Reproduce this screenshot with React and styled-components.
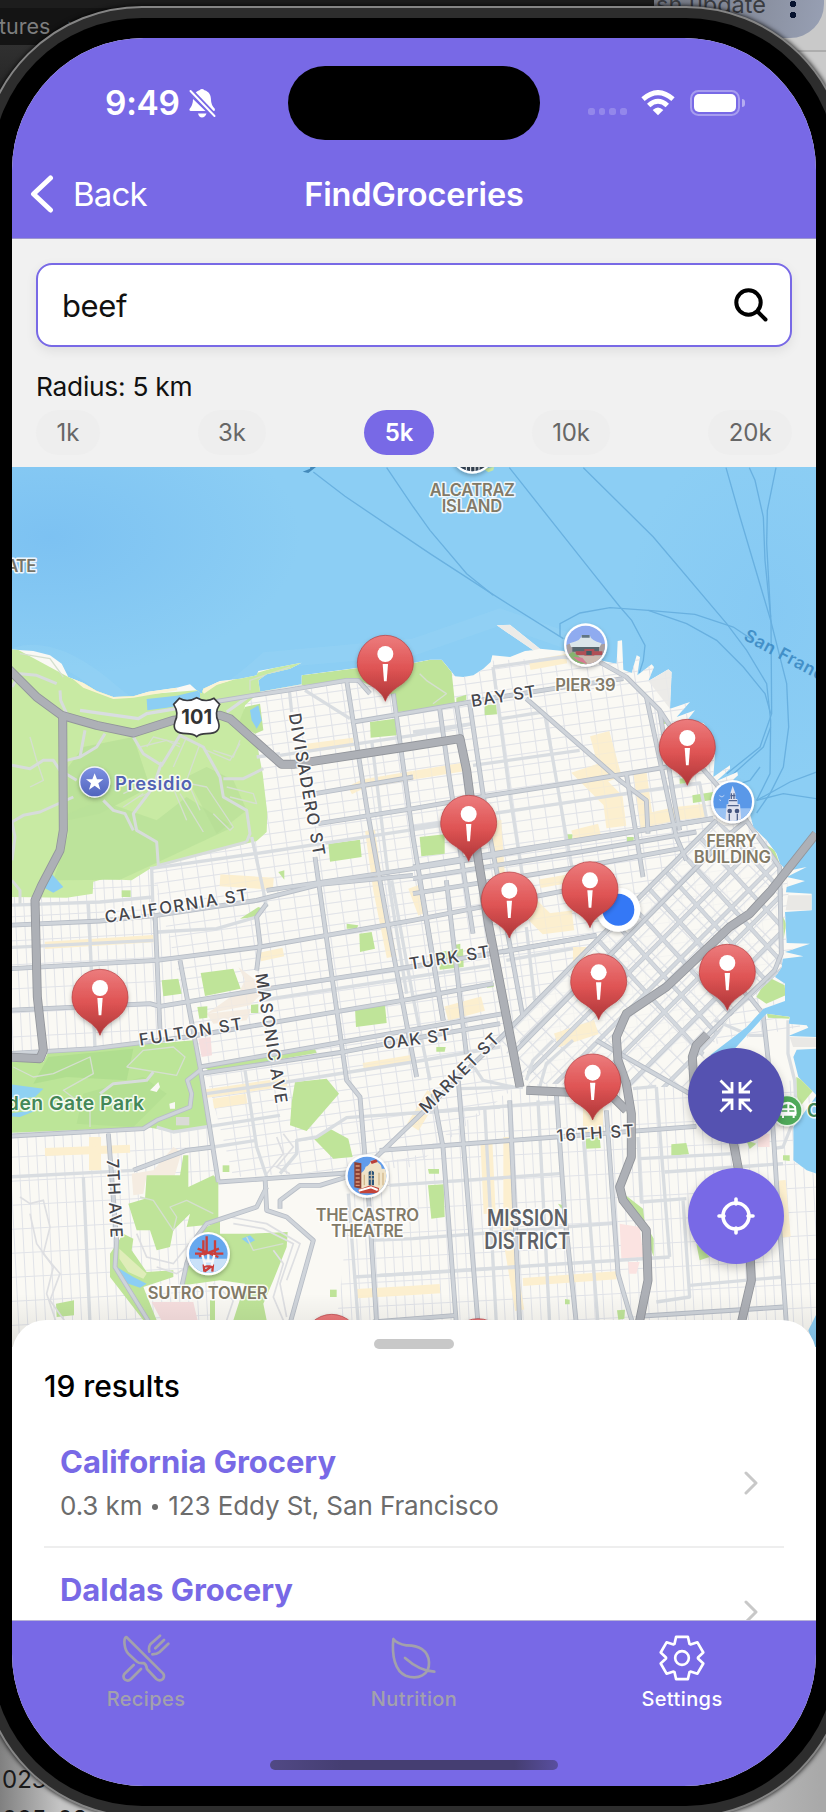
import React from "react";
import styled, { createGlobalStyle } from "styled-components";

const purple = "#7869e6";

const Global = createGlobalStyle`
  * { box-sizing: border-box; }
  body { margin: 0; overflow: hidden; background: #c4c4c4; font-family: Inter, "Liberation Sans", sans-serif; }
`;

/* ---------- desktop behind the device ---------- */
const Stage = styled.main`
  display: grid;
  grid-template: 1812px / 826px;
  overflow: hidden;
  > * { grid-area: 1 / 1; }
`;
const Desktop = styled.div`
  display: flex;
  flex-direction: column;
  justify-content: space-between;
  background: linear-gradient(90deg, #2a2a2a 0 50%, #c6c6c6 50%);
`;
const TopWindows = styled.div`
  display: flex;
  height: 300px;
`;
const DarkWindow = styled.div`
  width: 654px;
  background: linear-gradient(#1d1d1d 0 8px, #141414 8px 45px, #303030 45px, #222 110px);
`;
const Crumb = styled.div`
  padding-top: 8px;
  height: 45px;
  line-height: 37px;
  font-size: 21.5px;
  color: #7e7e7e;
  white-space: pre;
  text-indent: -1px;
`;
const LightWindow = styled.div`
  flex: 1;
  background: linear-gradient(#c9c9c9 0 50px, #adadad 50px 52px, #cbcbcb 52px);
`;
const UpdatePill = styled.div`
  display: flex;
  align-items: flex-start;
  justify-content: space-between;
  width: 170px;
  height: 38px;
  padding: 0 28px 0 2px;
  overflow: hidden;
  border-radius: 0 0 34px 0;
  background: linear-gradient(100deg, #727681, #98a0b4);
  font-size: 23.5px;
  line-height: 10px;
  color: #393b40;
  white-space: nowrap;
`;
const MenuDots = styled.i`
  width: 6px;
  height: 20px;
  background: radial-gradient(circle at 3px 4px, #06122e 3px, transparent 3.5px), radial-gradient(circle at 3px 15px, #06122e 3px, transparent 3.5px);
`;
const BottomWindow = styled.div`
  display: flex;
  flex-direction: column;
  justify-content: flex-end;
  height: 160px;
  padding-left: 2px;
  background: linear-gradient(90deg, #808080, #c4c4c4 60px 700px, #a9a9a9 820px);
  font-size: 24px;
  line-height: 40px;
  color: #1a1a1a;
  overflow: hidden;
`;
const FileLine = styled.span`
  height: 50px;
  flex: none;
  &:last-child { height: 2px; line-height: 20px; }
`;

/* ---------- device ---------- */
const Device = styled.div`
  width: 868px;
  height: 1812px;
  margin: 6px 0 0 -20px;
  border: 2px solid #858585;
  border-radius: 162px;
  background: #2d2d2d;
  padding: 10px;
  box-shadow: 0 0 5px #000;
`;
const Bezel = styled.div`
  height: 100%;
  padding: 20px;
  border-radius: 150px;
  background: #000;
`;
const Screen = styled.div`
  display: flex;
  flex-direction: column;
  height: 1748px;
  overflow: hidden;
  border-radius: 132px;
  background: #fff;
`;
const Header = styled.header`
  flex: none;
  height: 201px;
  background: ${purple};
  border-bottom: 1px solid #9e97cf;
  color: #fff;
`;
const StatusBar = styled.div`
  display: grid;
  grid-template-columns: 276px 252px 276px;
  align-items: center;
  padding-top: 27px;
  height: 102px;
`;
const Clock = styled.div`
  display: flex;
  align-items: center;
  gap: 9px;
  padding: 1px 0 0 93px;
  font-size: 33.5px;
  font-weight: 600;
  letter-spacing: -0.3px;
`;
const Island = styled.div`
  height: 74px;
  border-radius: 37px;
  background: #000;
`;
const Signals = styled.div`
  display: flex;
  align-items: center;
  padding-left: 48px;
`;
const Dots = styled.div`
  display: flex;
  gap: 4px;
  padding-top: 18px;
  margin-right: 14px;
  i { width: 6.7px; height: 6.7px; border-radius: 2.5px; background: rgba(255,255,255,.2); }
`;
const Battery = styled.div`
  width: 50px;
  height: 26px;
  margin-left: 15px;
  padding: 2px;
  border: 2px solid rgba(255,255,255,.35);
  border-radius: 8.5px;
  &::before { content: ""; display: block; height: 18px; border-radius: 5px; background: #fff; }
`;
const BatteryTip = styled.i`
  width: 3px;
  height: 8px;
  margin-left: 2px;
  border-radius: 0 4px 4px 0;
  background: rgba(255,255,255,.45);
`;
const NavBar = styled.nav`
  display: grid;
  grid-template-columns: 200px 1fr 200px;
  align-items: center;
  height: 98px;
  padding-bottom: 6px;
  padding-top: 16px;
`;
const BackButton = styled.div`
  display: flex;
  align-items: center;
  gap: 19px;
  padding-left: 17px;
  font-size: 33px;
  letter-spacing: -0.8px;
`;
const Title = styled.h1`
  margin: 0;
  text-align: center;
  font-size: 32.5px;
  font-weight: 600;
  letter-spacing: -0.1px;
  white-space: nowrap;
`;

/* ---------- search ---------- */
const Filters = styled.section`
  flex: none;
  height: 228px;
  padding: 24px 24px 0;
  background: #f1f1f1;
`;
const SearchBox = styled.div`
  display: flex;
  align-items: center;
  justify-content: space-between;
  height: 84px;
  padding: 0 22px 0 24px;
  border: 2px solid ${purple};
  border-radius: 16px;
  background: #fff;
  box-shadow: 0 4px 12px rgba(0,0,0,.08);
  font-size: 31px;
  letter-spacing: -0.4px;
  color: #111;
`;
const RadiusLabel = styled.div`
  margin-top: 25px;
  height: 38px;
  line-height: 29px;
  font-size: 26.3px;
  letter-spacing: -0.25px;
  color: #111;
`;
const Chips = styled.div`
  display: flex;
  justify-content: space-between;
`;
const Chip = styled.span`
  height: 45px;
  padding: 0 20.5px;
  border-radius: 23px;
  line-height: 45px;
  font-size: 24px;
  font-weight: ${p => (p.$on ? 600 : 400)};
  letter-spacing: -0.1px;
  background: ${p => (p.$on ? purple : "#eeeeee")};
  color: ${p => (p.$on ? "#fff" : "#666")};
`;

/* ---------- map ---------- */
const MapArea = styled.section`
  position: relative;
  flex: none;
  height: 880px;
  > svg { display: block; width: 804px; height: 880px; }
`;
const Fabs = styled.div`
  position: absolute;
  right: 32px;
  top: 581px;
  display: grid;
  gap: 24px;
`;
const Fab = styled.button`
  display: grid;
  place-items: center;
  width: 96px;
  height: 96px;
  padding: 0;
  border: 0;
  border-radius: 50%;
  background: ${p => p.$bg};
  box-shadow: 0 4px 10px rgba(0,0,0,.22);
`;

/* ---------- results sheet ---------- */
const Sheet = styled.section`
  position: relative;
  height: 300px;
  flex: none;
  overflow: hidden;
  margin-top: -27px;
  padding: 19px 32px 0;
  border-radius: 34px 34px 0 0;
  background: #fff;
`;
const Handle = styled.div`
  width: 80px;
  height: 10px;
  margin: 0 auto;
  border-radius: 5px;
  background: #c8c8c8;
`;
const Count = styled.h2`
  margin: 17px 0 0;
  height: 53px;
  line-height: 40px;
  font-size: 30px;
  font-weight: 500;
  letter-spacing: -0.05px;
`;
const Row = styled.article`
  display: flex;
  justify-content: space-between;
  align-items: center;
  height: 128.5px;
  padding: 2px 26px 0 16px;
  border-bottom: 2px solid #eee;
`;
const Name = styled.h3`
  margin: 0;
  line-height: 38px;
  font-size: 31px;
  font-weight: 650;
  letter-spacing: -0.05px;
  color: ${purple};
`;
const Address = styled.p`
  margin: 7px 0 0;
  line-height: 36px;
  font-size: 26px;
  letter-spacing: -0.1px;
  color: #6c6c6c;
  i { display: inline-block; width: 6px; height: 6px; margin: 0 10px 5px; border-radius: 50%; background: currentColor; }
`;

/* ---------- tabs ---------- */
const TabBar = styled.footer`
  flex: none;
  height: 167px;
  border-top: 1px solid #b7b2d8;
  background: ${purple};
`;
const Tabs = styled.div`
  display: grid;
  grid-template-columns: repeat(3, 1fr);
  height: 139px;
`;
const Tab = styled.div`
  display: flex;
  flex-direction: column;
  align-items: center;
  padding-top: 12px;
  font-size: 20px;
  line-height: 24px;
  font-weight: 500;
  letter-spacing: 0.4px;
  color: ${p => (p.$on ? "#fff" : "#a3a1ac")};
  svg { margin-bottom: 4px; }
`;
const HomeBar = styled.div`
  width: 288px;
  height: 10px;
  margin: 0 auto;
  border-radius: 5px;
  background: linear-gradient(90deg, #514985, #453e72 25% 85%, #594fa0);
`;

/* Map units are thirds of a pixel; each tile has its own origin. */
const origin = { A: [0, 0], B: [1239, 0], C: [0, 1260], D: [1239, 1260] };
const move = t => `translate(${origin[t][0]} ${origin[t][1]})`;

const motorways = [
  ["A", "20,620 110,710 185,765 290,795 400,818 520,780 660,765 690,775 845,912 880,912 1239,857 1380,835 1400,930 1435,1200 1450,1290 1465,1390 1560,1880"],
  ["A", "188,765 190,1110 180,1170 125,1275 105,1320 112,1610 130,1770 120,1795 20,1790"],
  ["D", "340,630 470,636 600,650 640,690"],
  ["D", "1209,-140 1075,30 1010,100 950,140 760,320 640,400 610,470 615,540 640,610 655,700 655,830 620,920 630,960 700,1050 705,1200 670,1370"],
  ["D", "882,462 850,495 838,530 845,640 960,780 975,860 1010,1100 1015,1200 975,1370"],
];
const arterials = [
  ["A", "640,725 760,705 860,690 1040,660 1075,660 1110,700"], ["A", "1040,660 1100,1040 1165,1400 1250,1850"], ["A", "1180,700 1239,1130 1330,1680"],
  ["A", "1060,785 1239,755 1370,732 1480,713 1660,685 1870,655"], ["A", "945,1000 1239,950"], ["A", "955,1090 1239,1045 1440,1010 1700,970 2000,920"],
  ["A", "800,1290 1239,1225 1460,1190 1600,1165 2140,1075"], ["A", "945,1190 1040,1860 1080,1910 1095,2090"],
  ["B", "560,605 640,650 740,750 820,870 900,960 1000,1080 1100,1220 1105,1480 1085,1530 945,1665 880,1730"],
  ["B", "340,715 620,960 700,1020 705,1120"], ["B", "130,730 150,860"], ["B", "170,730 225,1100 270,1330"], ["B", "80,745 110,960 180,1420"],
  ["B", "700,710 790,1130 820,1200"], ["B", "740,750 780,1000 800,1110"], ["B", "640,940 690,1250"],
  ["B", "0,1220 300,1170 900,1075"], ["B", "0,1255 500,1175 850,1115"], ["B", "0,1300 500,1220 800,1165"],
  ["B", "910,1080 700,1290 265,1730 -120,2100"], ["B", "1000,1080 940,1130 300,1780"],
  ["C", "20,135 300,122 470,105 770,60 960,12 1239,-15"], ["C", "20,266 470,240 780,200 1010,160 1239,120 1700,30"],
  ["C", "20,390 450,370 480,378 770,330 1239,258 1500,215 1790,165"], ["C", "20,520 280,505 560,470 740,440 1239,355 1480,310"],
  ["C", "600,560 1239,448 1510,400"], ["C", "600,580 1030,515 1239,475 1500,430"],
  ["C", "465,100 480,450"], ["C", "540,240 600,560 655,905"], ["C", "800,70 770,110 780,190 770,270"],
  ["C", "795,890 800,990 860,1010 940,1080 870,1330"], ["C", "655,905 800,895 1040,878"],
  ["C", "20,768 430,745 470,720 570,680 575,640 562,600 600,570"], ["C", "325,760 350,1080 345,1160 450,1330"],
  ["C", "400,870 560,810 640,800"], ["C", "545,1220 560,1150 590,1070 620,1030 770,980 800,920"], ["C", "840,985 840,960 900,915 960,915 1040,890"],
  ["C", "1105,940 1130,1330"], ["D", "20,0 90,420"], ["D", "60,640 90,800 130,1330"], ["D", "135,590 160,900 195,1330"],
  ["D", "255,0 330,410"], ["D", "430,640 455,1000 490,1330"], ["D", "580,690 615,1180 650,1300 660,1330"], ["D", "290,660 320,1330"],
  ["D", "-100,810 430,770 850,738"], ["D", "-120,1325 130,1305"], ["D", "690,1307 1110,1280"], ["D", "1010,350 1050,400 1068,560 1090,900 1120,1330"],
  ["D", "270,215 550,165"], ["D", "550,480 830,640"], ["D", "100,0 160,520"],
];
const streets = [
  ["A", "840,885 1239,825 1420,790"], ["A", "770,890 840,880"], ["A", "915,690 1050,775"], ["A", "868,690 875,755"], ["A", "450,1225 800,1175 1239,1108 1360,1090"],
  ["A", "755,1130 790,1290 800,1340"], ["A", "1115,840 1170,1290 1220,1600"], ["A", "455,1225 460,1380"], ["A", "240,750 415,775 440,760 530,745 640,725"], ["A", "680,755 750,705"],
  ["B", "240,620 290,1000 335,1290"], ["B", "240,620 450,590 560,600"], ["B", "395,760 420,900 460,1130 490,1290"], ["B", "265,775 390,755"], ["B", "180,915 500,870"],
  ["B", "250,1058 440,1030 700,990 860,968 880,1070"], ["B", "0,815 180,790"], ["B", "0,1100 180,1072"],
  ["C", "20,75 300,65 460,50"], ["C", "20,202 460,180"], ["C", "265,70 285,500"], ["C", "470,155 650,145 770,110"], ["C", "620,640 860,605 1239,545 1500,500"],
  ["C", "735,570 770,800 800,890"], ["C", "20,890 400,870"], ["C", "640,800 770,780"], ["C", "250,890 270,1330"], ["C", "470,740 520,755 840,705"],
  ["C", "840,880 890,820 890,780 950,770 1040,712 1239,698 1500,680"], ["C", "1045,940 1075,1330"], ["C", "1060,1190 1239,1180 1560,1160"], ["C", "1110,1080 1239,1075 1850,1028"],
  ["C", "780,360 1239,290"], ["C", "1175,0 1239,350 1290,600"], ["D", "-70,915 440,880"], ["D", "0,700 430,665"], ["D", "-100,1185 770,1130"], ["D", "140,625 330,620"],
  ["D", "215,680 250,1330"], ["D", "375,660 410,1330"], ["D", "510,760 555,1330"], ["D", "675,770 685,965 820,955"], ["D", "730,620 770,1130"], ["D", "810,960 830,1250 730,1265"],
  ["D", "680,835 960,820"], ["D", "755,875 1110,850"], ["D", "830,1215 1110,1190"], ["D", "905,420 1010,465 1060,465"], ["D", "1125,420 1125,520 1145,600 1150,700 1110,800 1080,805"],
  ["D", "660,625 730,618"], ["D", "280,240 480,205"], ["D", "0,350 220,312"], ["D", "0,290 230,255"], ["D", "340,140 365,360"], ["D", "170,540 210,600 300,620"], ["D", "340,600 360,540 420,480"], ["D", "380,620 400,550 480,480"],
];
const trails = [
  ["A", "36,915 90,925 130,900 160,900 180,930 230,960"], ["A", "200,900 240,890 255,810"], ["A", "240,890 290,860 315,820"], ["A", "400,830 430,880 485,915 540,825 610,860 660,950 670,1010 740,1050 750,1120 740,1145"],
  ["A", "670,955 730,955 790,925"], ["A", "485,905 460,980 400,1060 410,1110 470,1145 475,1215 740,1145"], ["A", "310,1020 340,1050 375,1060 400,1110"], ["A", "36,1085 70,1065 120,1055 220,1010"], ["A", "36,680 60,640 110,645 170,670"], ["A", "180,690 182,720 200,760"],
  ["A", "36,1200 45,1130 36,1085"], ["C", "300,640 340,610 440,600 460,575"], ["C", "36,0 60,30 60,75"],
];
const finePaths = [
  ["A", "60,580 150,595 190,650"], ["A", "440,860 460,830 540,850"], ["A", "560,830 520,920"], ["A", "600,850 560,960 420,990"], ["A", "640,870 700,890 720,840"], ["A", "420,1010 520,960 620,980 700,1100 690,1110 640,1060"], ["A", "540,1000 610,1115"], ["A", "750,690 750,660 870,620"],
  ["A", "680,980 760,1000 770,1030 690,1010"], ["A", "90,830 110,900 130,960 90,980"],
  ["A", "420,860 500,840 540,860"], ["A", "620,870 690,900 720,850"], ["A", "510,960 560,1080"], ["A", "570,980 600,1050"], ["A", "370,1000 450,960"], ["A", "370,1040 430,1000"],
  ["C", "40,560 100,590 160,580 270,530 280,580 190,630 230,660"], ["C", "380,560 430,510 520,500 555,530 530,585 380,560"], ["C", "270,660 270,740"], ["C", "420,950 460,960 520,1050 530,1010 510,980 560,960 640,1000"], ["C", "740,1070 760,1110 850,1090"],
  ["B", "20,640 40,660 100,700 60,730"],
];
const contours = [
  "60,950 90,970 130,960 150,1040 130,1120 180,1180 150,1260 200,1330", "90,1000 110,1090 160,1160 140,1240 170,1330", "830,770 850,820 800,880", "850,760 880,800 830,860 870,880",
  "410,1060 440,1130 520,1150 600,1050", "470,1160 530,1180 560,1160", "690,1010 800,1030 900,1090 860,1200", "700,1030 790,1045 880,1090 840,1210 860,1310", "820,1110 850,1150 820,1250 850,1320", "640,1210 700,1260 680,1320",
];
const shops = [
  ["A", "910,865 1060,845", 26], ["A", "1050,990 1090,970 1239,945", 26], ["A", "1110,1110 1135,1290 1175,1490", 30], ["B", "0,945 150,920", 26], ["B", "350,615 460,595", 28], ["B", "560,820 590,930 530,950 600,1020 610,1100", 60], ["B", "680,930 700,1080 790,1060 880,1050", 40],
  ["B", "250,1080 260,1240", 30], ["B", "480,1130 560,1110", 40], ["B", "380,1270 550,1240", 26], ["C", "135,195 460,175", 22], ["C", "660,0 820,10", 36], ["C", "780,230 850,215", 26], ["C", "615,640 860,605", 26], ["C", "640,670 740,655", 30],
  ["C", "285,770 285,870", 36], ["C", "135,815 390,805", 24], ["C", "1090,560 1239,535", 24], ["C", "1070,1240 1239,1230 1320,1225", 28], ["D", "330,60 400,130 480,120", 60], ["D", "100,400 210,370", 44], ["D", "430,480 550,440", 44], ["D", "500,200 500,280", 40],
  ["D", "220,780 230,1000", 36], ["D", "285,770 285,1080 320,1290", 28], ["D", "330,1205 610,1185", 24], ["D", "540,670 540,760", 60], ["D", "1105,900 1120,1070", 26], ["D", "0,20 30,100", 30], ["D", "0,740 60,640", 40],
];
const parks = [
  ["A", "715,790 735,740 780,730 790,810 765,820"], ["A", "1110,785 1185,775 1190,825 1112,832"], ["A", "985,1150 1080,1138 1085,1190 990,1204"], ["A", "835,1235 853,1230 853,1258"], ["A", "365,1290 392,1290 392,1310 365,1310"],
  ["A", "905,645 1080,622 1239,608 1290,598 1325,598 1355,635 1365,730 1239,752 1190,755 1180,705 1075,660 905,675"],
  ["B", "130,712 160,703 160,720 130,727"], ["B", "215,735 250,732 252,762 215,765"], ["B", "20,1130 95,1122 95,1180 25,1188"], ["B", "460,1122 478,1122 478,1142 460,1145"], ["B", "642,1130 662,1130 662,1146 642,1148"], ["B", "745,770 760,790 745,792"], ["B", "838,1005 900,995 900,1018 840,1028"], ["B", "800,955 830,950 830,970 800,970"], ["B", "1040,1140 1085,1170 1100,1210 1080,1200"],
  ["C", "485,300 535,295 545,340 490,348"], ["C", "602,278 700,265 722,325 615,347"], ["C", "592,380 622,378 622,412 598,415"], ["C", "753,373 775,372 775,398 753,398"], ["C", "1078,160 1115,155 1125,205 1080,215"], ["C", "1040,130 1075,135 1070,145 1040,145"], ["C", "1065,385 1155,375 1160,428 1068,440"], ["C", "720,115 775,80 790,85 770,110"],
  ["C", "610,560 945,507 950,518 630,573"], ["C", "885,605 980,595 1017,640 920,752 870,735 875,665"], ["C", "943,777 990,745 1045,775 1058,830 1000,835"],
  ["C", "440,885 540,885 550,825 565,825 565,920 640,885 655,900 655,1030 560,1040 570,1000 520,1050 510,1100 470,1110 450,1050 410,1050 385,970 435,955"],
  ["C", "370,1060 400,1075 395,1110 440,1175 520,1170 520,1190 430,1220 470,1320 430,1320 330,1190 330,1120"], ["C", "600,1050 660,1020 660,1060 750,1060 863,1055 860,1100 820,1200 790,1270 800,1320 700,1320 735,1210 660,1200 550,1215 560,1160 620,1130"],
  ["C", "168,1270 222,1260 222,1305 170,1310"], ["C", "630,1260 645,1260 645,1320 630,1320"], ["C", "990,1228 1010,1228 1010,1250 990,1250"], ["C", "668,855 688,855 688,875 668,875"],
  ["D", "75,215 150,205 152,260 80,268"], ["D", "120,195 142,190 142,210 122,210"], ["D", "45,915 92,912 95,1010 55,1015"], ["D", "518,775 560,770 563,803 520,805"], ["D", "775,792 820,788 828,822 775,826"], ["D", "632,940 690,985 695,1025 722,1075 722,1130 690,1040 635,975"],
  ["D", "70,500 98,500 95,514 70,514"], ["D", "220,310 242,308 242,320 222,322"], ["D", "45,866 78,866 78,880 48,880"], ["D", "435,970 450,975 445,985"], ["D", "456,1256 470,1258 470,1272 456,1272"], ["D", "612,1290 636,1288 634,1315 616,1318"], ["D", "630,390 648,384 648,398"],
  ["D", "850,1090 890,1130 860,1140"], ["D", "1030,350 1065,290 1115,315 1118,345 1060,370"], ["D", "1060,395 1130,398 1130,415 1065,412"], ["D", "1110,110 1120,130 1112,175"], ["D", "1150,590 1209,620 1160,680 1150,640"], ["D", "1000,780 1030,790 1010,806"], ["D", "1110,825 1130,825 1130,842 1110,840"],
];
const ferries = [
  "940,35 1035,108 1290,280 1475,400 1690,535", "1160,22 1240,140 1290,210 1400,340 1480,405", "1528,22 1780,340 1860,440 1895,480 1935,555 1930,600 1918,638", "1750,22 1960,230 2180,490 2240,570 2300,670 2312,780 2310,940 2270,1020",
  "1680,530 1680,490 1740,458 1830,442 1945,450 2085,462 2200,500 2260,540", "1945,450 2060,490 2150,540 2230,620 2295,700 2312,760", "2178,22 2220,170 2312,480 2360,670 2366,800 2350,920 2310,1000 2270,1058",
  "2248,22 2265,60 2290,170 2295,300 2313,480 2315,760 2280,860 2180,940", "2328,22 2302,150 2300,250 2312,470", "2280,920 2250,960 2220,970", "2312,800 2290,860 2190,950", "2270,1020 2370,965 2450,935", "2270,1020 2350,1000 2450,1015",
];
const pins = [[1156, 525], [2062, 777], [1406, 1005], [1528, 1235], [1770, 1204], [1796, 1480], [2182, 1452], [1778, 1781], [300, 1527], [995, 2562], [1434, 2575]];

const land = "20,566 100,572 150,585 185,610 205,650 250,668 290,692 340,710 400,708 445,694 530,682 570,672 590,690 605,700 610,685 660,662 720,655 770,645 775,632 850,618 905,607 870,625 800,642 775,660 780,694 905,672 905,645 1075,622 1239,608 1290,598 1325,598 1355,635 1365,648 1390,650 1420,645 1450,625 1472,605 1477,585 1530,590 1575,572 1600,570 1490,495 1530,493 1620,565 1690,572 1710,580 1800,600 1850,610 1853,542 1866,540 1870,628 1895,638 1910,585 1920,590 1912,645 1955,612 1962,620 1945,662 2005,627 2015,635 2010,745 2070,725 2030,770 2085,750 2060,782 2110,788 2140,830 2145,880 2140,950 2190,915 2190,925 2150,962 2212,935 2214,945 2170,985 2190,1000 2250,1060 2260,1100 2300,1140 2330,1180 2340,1210 2360,1232 2420,1220 2360,1250 2415,1262 2360,1280 2358,1296 2435,1300 2435,1350 2355,1355 2360,1448 2430,1450 2355,1475 2410,1488 2348,1495 2345,1520 2325,1550 2355,1570 2355,1622 2290,1645 2240,1700 2130,1785 2200,1770 2300,1660 2370,1670 2365,1690 2420,1695 2425,1702 2365,1727 2450,1730 2450,1765 2390,1768 2380,1790 2395,1850 2450,1905 2410,1960 2380,2000 2380,2100 2420,2130 2450,2140 2450,2560 2425,2610 2450,2680 20,2680";

const Lines = ({ items, color, width }) => (
  <g fill="none" stroke={color} strokeWidth={width} strokeLinejoin="round" strokeLinecap="butt">
    {items.map(([t, p], i) => <polyline key={i} points={p} transform={move(t)} />)}
  </g>
);

const somaLines = [];
for (let i = 0; i < 13; i++) somaLines.push(["A", `${1300 + i * 98},900 ${2300 + i * 98},1990`]);
for (let i = 0; i < 13; i++) somaLines.push(["A", `${1000 + i * 112},2200 ${2150 + i * 112},1050`]);

const Pin = ({ x, y }) => (
  <g transform={`translate(${x} ${y})`}>
    <path d="M0 198C-8 176 -22 165 -44 150C-66 137 -84 113 -84 84A84 84 0 0 1 84 84C84 113 66 137 44 150C22 165 8 176 0 198Z" fill="url(#pin)" stroke="#b33b3e" strokeWidth="2" filter="url(#soft)" />
    <circle cy="56" r="24" fill="#fff" />
    <path d="M-8 86H8L4 138H-4Z" fill="#fff" />
  </g>
);

const Label = ({ t = "A", x, y, w, size = 50, color = "#827a67", weight = 600, rotate = 0, stretch, children }) => (
  <text x="0" y="0" transform={`translate(${origin[t][0] + x} ${origin[t][1] + y}) rotate(${rotate})`} textLength={w} lengthAdjust={stretch ? "spacingAndGlyphs" : "spacing"}
    fontSize={size} fontWeight={weight} fill={color} stroke="#fff" strokeOpacity=".85" strokeWidth="9" strokeLinejoin="round" paintOrder="stroke">{children}</text>
);
const Street = p => <Label color="#45464b" weight={500} size={50} {...p} />;

const Landmark = ({ x, y, sky = "#8fb2ee", children }) => (
  <g transform={`translate(${x} ${y})`}>
    <circle r="65" fill="#fff" filter="url(#soft)" />
    <circle r="58" fill={sky} />
    <g clipPath="url(#medal)">{children}</g>
  </g>
);

const CityMap = () => (
  <svg viewBox="36 20 2412 2640" role="img" aria-label="Map of San Francisco">
    <defs>
      <linearGradient id="pin" x1="0" y1="0" x2="0" y2="1">
        <stop offset="0" stopColor="#ec7c7d" /><stop offset=".5" stopColor="#df5454" /><stop offset="1" stopColor="#ad3638" />
      </linearGradient>
      <linearGradient id="presidioBlue" x1="0" y1="0" x2="0" y2="1"><stop offset="0" stopColor="#7d90e2" /><stop offset="1" stopColor="#5165bd" /></linearGradient>
      <radialGradient id="deep"><stop offset="0" stopColor="#74bbf1" /><stop offset="1" stopColor="#74bbf1" stopOpacity="0" /></radialGradient>
      <linearGradient id="shade" x1="0" y1="0" x2="0" y2="1"><stop offset="0" stopColor="#000" stopOpacity="0" /><stop offset="1" stopColor="#000" stopOpacity=".1" /></linearGradient>
      <filter id="soft" x="-30%" y="-30%" width="160%" height="170%"><feDropShadow dx="0" dy="6" stdDeviation="7" floodOpacity=".28" /></filter>
      <clipPath id="medal"><circle r="58" /></clipPath>
      <clipPath id="soma"><polygon points="2149,1080 2350,1220 2345,1530 2190,1670 2040,1880 1880,1880 1800,1870 1590,1870 1545,1690" /></clipPath>
      <pattern id="blocks" width="46" height="33" patternUnits="userSpaceOnUse" patternTransform="rotate(-8)"><path d="M0 1.5H46M1.5 0V33" stroke="#e1e3e8" strokeWidth="3.2" fill="none" /></pattern>
      <pattern id="avenues" width="27" height="72" patternUnits="userSpaceOnUse" patternTransform="rotate(-3)"><path d="M0 1.5H27M1.5 0V72" stroke="#e1e3e8" strokeWidth="3" fill="none" /></pattern>
      <pattern id="diagonal" width="56" height="37" patternUnits="userSpaceOnUse" patternTransform="rotate(-45)"><path d="M0 1.5H56M1.5 0V37" stroke="#dcdfe5" strokeWidth="4" fill="none" /></pattern>
      <clipPath id="landClip"><polygon points={land} /></clipPath>
    </defs>
    <rect width="2500" height="2700" fill="#8ccef4" />
    <ellipse cx="150" cy="230" rx="750" ry="420" fill="url(#deep)" opacity=".65" />
    <ellipse cx="2300" cy="450" rx="420" ry="520" fill="url(#deep)" opacity=".25" />
    <path d="M36 590Q160 540 340 700T800 600L1240 560L1500 470L1700 540" fill="none" stroke="#a7daf3" strokeWidth="50" opacity=".2" />
    <g fill="none" stroke="#5ba5d8" strokeWidth="4" opacity=".7">{ferries.map((p, i) => <polyline key={i} points={p} />)}</g>
    <polygon points={land} fill="#faf9f4" />
    <g clipPath="url(#landClip)">
      <polygon points="700,640 2300,560 2400,1700 1560,1870 1240,2120 700,2150 450,1220" fill="url(#blocks)" />
      <polygon points="20,1240 460,1220 600,1800 655,2160 640,2680 20,2680" fill="url(#avenues)" />
      <polygon points="1060,2120 1240,2090 1560,1870 2450,1860 2450,2680 1000,2680" fill="url(#avenues)" />
      <polygon points="2149,1080 2350,1220 2345,1530 2190,1670 2060,1880 1590,1870 1490,1740" fill="#faf9f4" />
      <polygon points="2149,1080 2350,1220 2345,1530 2190,1670 2060,1880 1590,1870 1490,1740" fill="url(#diagonal)" />
      <polygon points="20,550 205,650 250,668 340,710 590,690 900,600 905,672 780,694 735,735 725,800 765,822 788,940 802,1060 800,1115 770,1142 480,1212 450,1225 395,1260 310,1256 280,1264 278,1300 200,1312 20,1310" fill="#c8eaa3" />
      <polygon points="205,920 250,860 400,830 450,980 300,1060 205,1080" fill="#b5de94" opacity=".7" />
      <polygon points="205,1060 300,1020 470,1080 560,1010 700,1100 475,1205 360,1258 160,1260 205,1120" fill="#b9e198" opacity=".8" />
      <polygon points="560,950 620,920 700,960 740,1050 650,1120" fill="#b4dc93" opacity=".5" />
      <polygon points="205,645 250,655 340,705 400,700 530,680 532,690 400,712 340,716 250,682" fill="#fbf3d4" />
      <polygon points="605,690 620,668 700,658 650,674 612,700" fill="#fbf3d4" />
      <polygon points="440,716 530,706 600,690 600,725 500,742 442,750" fill="#8ccef4" />
      <polygon points="128,1280 155,1240 190,1280 160,1297" fill="#8ccef4" />
      <polygon points="20,1805 130,1805 145,1775 280,1765 580,1740 600,1820 625,2000 520,2015 440,2000 20,2018" fill="#bce598" />
      <polygon points="145,1790 400,1765 380,1860 200,1850 100,1870" fill="#a9d888" opacity=".6" />
      <polygon points="250,1900 430,1850 500,1900 400,2000 230,1990" fill="#aedb8d" opacity=".5" />
      <g transform="translate(0 1260)">
        <path d="M20 610L130 625L105 650L60 655L20 670ZM20 700L110 690L60 710L20 708Z" fill="#8fd1f2" />
        <path d="M620 400L750 375L800 325L715 260L735 300L720 330ZM620 400L755 385L740 420L640 430ZM400 945L395 880L460 870L520 800L545 815L520 900L440 885L430 940Z" fill="#f5ece1" />
        <path d="M595 475L632 470L636 525L605 530ZM455 1265L580 1265L595 1330L490 1330Z" fill="#f6dede" />
        <path d="M450 630L475 605L480 620L470 635ZM508 670L525 665L525 685L510 685Z" fill="#f9f8f4" />
        <path d="M528 710H568V735H528Z" fill="#dadbd6" />
      </g>
      <g transform="translate(1239 1260)" fill="#fbe3e1">
        <path d="M620 1030L680 1040L692 1130L625 1135ZM645 1145H680L670 1180H648ZM1035 760H1070V800H1035Z" />
        <path d="M1125 45H1195V90H1118ZM1130 470L1209 472V500H1140Z" fill="#e9e8e5" />
      </g>
      <polygon points="1490,495 1530,493 1620,565 1590,572" fill="#ecebe8" />
      <polygon points="1945,662 2005,627 2015,635 2010,745" fill="#ecebe8" />
      <g stroke="#fcefcf" fill="none">{shops.map(([t, p, w], i) => <polyline key={i} points={p} strokeWidth={w} transform={move(t)} />)}</g>
      <g opacity=".25"><polygon points="850,700 2300,560 2400,1700 1560,1870 1240,2120 700,2150 500,1250 800,1180" fill="url(#blocks)" /></g>
      <g fill="#bfe499">{parks.map(([t, p], i) => <polygon key={i} points={p} transform={move(t)} />)}</g>
      <g transform="translate(0 1260)">
        <path d="M350 1160L400 1190L440 1210L420 1222L370 1205ZM725 1075L750 1065L765 1080L745 1090Z" fill="#8ccef4" />
        <path d="M358 1105L385 1130L440 1180L430 1195L385 1175L358 1135Z" fill="#dfedb9" />
      </g>
      <path d="M750 750L775 735L785 780L770 805L755 780Z" fill="#8ccef4" />
      <g fill="none" stroke="#dedfe2" strokeWidth="5">{contours.map((p, i) => <polyline key={i} points={p} transform="translate(0 1260)" />)}</g>
      <Lines items={finePaths} color="#d5dfcf" width="4" />
      <Lines items={trails} color="#d7dcdb" width="9" />
      <g clipPath="url(#soma)"><Lines items={somaLines} color="#c3c8cf" width="13" /><Lines items={somaLines} color="#d3d8de" width="9" /></g>
      <Lines items={streets} color="#d9dde1" width="10" />
      <Lines items={arterials} color="#b7bdc6" width="14.5" />
      <Lines items={arterials} color="#cfd4da" width="9.5" />
    </g>
    <Lines items={motorways} color="#92959b" width="27" />
    <Lines items={motorways} color="#adb0b6" width="22" />
    <path d="M908 34L930 25L932 15L948 20L925 38Z" fill="#4389ba" />
    <path d="M1450 25L1482 20L1480 30L1465 36Z" fill="#c8eaa3" />

    <Label x={-15} y={336} w={124} color="#777468">GATE</Label>
    <Label t="B" x={50} y={106} w={256}>ALCATRAZ</Label>
    <Label t="B" x={86} y={154} w={182}>ISLAND</Label>
    <Label t="B" x={427} y={692} w={181}>PIER 39</Label>
    <Label t="B" x={880} y={1160} w={152}>FERRY</Label>
    <Label t="B" x={842} y={1209} w={232}>BUILDING</Label>
    <Label t="C" x={947} y={1022} w={310}>THE CASTRO</Label>
    <Label t="C" x={993} y={1070} w={218}>THEATRE</Label>
    <Label t="C" x={443} y={1257} w={360}>SUTRO TOWER</Label>
    <Label x={345} y={989} w={231} size={55} color="#5263b3">Presidio</Label>
    <Label t="C" x={-78} y={688} w={510} size={58} color="#438858">Golden Gate Park</Label>
    <Label t="D" x={1182} y={711} size={56} color="#438858">Chase Center</Label>
    <text transform="translate(2228 537) rotate(28)" fontSize="52" fontWeight="600" letterSpacing="2" fill="#4390c8">San Francisco Bay</text>
    <Street x={866} y={762} w={432} rotate={80}>DIVISADERO ST</Street>
    <Street t="C" x={766} y={282} w={394} rotate={81}>MASONIC AVE</Street>
    <Street t="C" x={320} y={837} w={236} rotate={87}>7TH AVE</Street>
    <Street t="C" x={317} y={128} w={434} rotate={-9}>CALIFORNIA ST</Street>
    <Street t="C" x={420} y={496} w={312} rotate={-9}>FULTON ST</Street>
    <Street t="D" x={-8} y={268} w={242} rotate={-9}>TURK ST</Street>
    <Street x={1152} y={1767} w={202} rotate={-8}>OAK ST</Street>
    <Street t="D" x={40} y={702} w={314} rotate={-45}>MARKET ST</Street>
    <Street t="D" x={432} y={784} w={232} rotate={-4}>16TH ST</Street>
    <Street t="B" x={177} y={740} w={196} rotate={-9}>BAY ST</Street>
    <Label t="D" x={222} y={1038} w={243} size={68} color="#5d6166" stretch>MISSION</Label>
    <Label t="D" x={214} y={1107} w={257} size={68} color="#5d6166" stretch>DISTRICT</Label>

    <g transform="translate(590 770)">
      <path d="M-52 -56Q-28 -42 0 -58Q28 -42 52 -56L69 -38Q52 -12 65 14Q76 50 30 50Q10 50 0 59Q-10 50 -30 50Q-76 50 -65 14Q-52 -12 -69 -38Z" fill="#fff" stroke="#3b3c40" strokeWidth="5" />
      <text x="-46" y="22" fontSize="62" fontWeight="700" fill="#333" textLength="92" lengthAdjust="spacingAndGlyphs">101</text>
    </g>
    <g transform="translate(284 965)">
      <circle r="47" fill="#f0f2fa" filter="url(#soft)" /><circle r="43" fill="url(#presidioBlue)" />
      <path d="M0 -26L7 -8L26 -8L11 4L17 23L0 11L-17 23L-11 4L-26 -8L-7 -8Z" fill="#fff" />
    </g>
    <g transform="translate(2361 1951)">
      <circle r="47" fill="#e9f5ea" filter="url(#soft)" /><circle r="43" fill="#4fa95a" />
      <path d="M-20 -14Q4 -34 24 -12L26 6H-20ZM-20 12H28M-12 12V22M20 12V22M-18 -4H24M4 -24V6" fill="none" stroke="#fff" strokeWidth="6" />
    </g>
    <Landmark x={1417} y={-25}><path d="M-58 40H58V60H-58Z" fill="#33414f" /><path d="M-18 42V58M-5 42V58M8 42V58M20 42V58" stroke="#fff" strokeWidth="3" /></Landmark>
    <Landmark x={1757} y={554} sky="#8fabf0">
      <path d="M-58 0L-35 -8L-10 8L58 -4V60H-58Z" fill="#a99f9f" /><path d="M-48 -5Q-10 -15 -12 -30H12Q15 -14 48 -5L42 6H-44Z" fill="#dbe5e9" /><path d="M-12 -30H12V-22H-12Z" fill="#617582" />
      <path d="M-40 6H40V20H-40Z" fill="#56656c" /><path d="M-30 19H50V30H-30ZM-4 12H26V32H-4Z" fill="#b04f55" /><path d="M2 18H18V30H2Z" fill="#405b63" />
      <path d="M-58 32H58V60H-58Z" fill="#cbb9ae" /><path d="M-55 30L-38 20L5 55L-35 60Z" fill="#85b46f" /><path d="M-38 36L-10 38L5 58L-22 48Z" fill="#d77a92" />
    </Landmark>
    <Landmark x={2198} y={1024} sky="#5a98e8">
      <path d="M-58 20H58V60H-58Z" fill="#9ac2f3" /><path d="M-22 58L-18 8H-13L-12 -8H-8L-7 -25L0 -48L8 -25L9 -8H14L15 8H22L26 58Z" fill="#dfe2ef" />
      <path d="M-7 -18H8M-11 -3H13M-15 12H18M-4 -25V-8M4 -25V-8M14 36V58M-10 36V58" stroke="#52648e" strokeWidth="4" /><circle cx="-9" cy="28" r="7" fill="#44547f" /><circle cx="13" cy="28" r="7" fill="#44547f" /><path d="M-40 -18l8 4 7-5M-40 -6l5 3" fill="none" stroke="#bcd2f4" strokeWidth="3" />
    </Landmark>
    <Landmark x={1101} y={2147} sky="#609ceb">
      <path d="M-22 50V-8Q-8 -12 -4 -28Q8 -32 12 -46Q26 -50 34 -40Q44 -34 44 -22H58V50Z" fill="#f0e3c8" /><path d="M-38 -42L-17 -38V38L-38 34Z" fill="#8c4034" /><path d="M-34 -30H-22M-34 -18H-22M-34 -6H-22M-34 6H-22M-34 18H-22M-34 28H-22" stroke="#d9987b" strokeWidth="4" />
      <path d="M5 -12Q13 -20 21 -12V28H5Z" fill="#2c557b" /><path d="M5 -2H21M5 9H21M13 -16V28" stroke="#d8c8ae" strokeWidth="3" /><path d="M10 -44L28 -50L32 -42L14 -36Z" fill="#b93e39" /><path d="M36 -10V28M-8 -4V28M48 -10V28" stroke="#d3b98e" strokeWidth="4" /><path d="M-28 42L10 28L36 36L34 52H-20Z" fill="#c44339" /><path d="M-25 44L12 34L32 42" stroke="#fff" strokeWidth="6" fill="none" />
    </Landmark>
    <Landmark x={625} y={2380} sky="#67a8ee">
      <path d="M-58 15H58V60H-58Z" fill="#c9e1f8" /><g stroke="#cb3e3b" strokeWidth="7" fill="none"><path d="M-15 -40V5M-5 -52V0M20 -40V5M-40 0H45M-32 -15L30 10M32 -15L-28 8" /><path d="M-14 38H14M-12 54L-14 32M12 54L14 32M-12 54L12 36" /></g><path d="M-18 4L-9 36M18 4L10 36M-12 23H14M0 2V25" stroke="#f8f8f8" strokeWidth="7" fill="none" />
    </Landmark>
    <circle cx="1855" cy="1348" r="66" fill="#fff" filter="url(#soft)" /><circle cx="1855" cy="1348" r="48" fill="#3478f6" />
    {pins.map(([x, y]) => <Pin key={`${x}-${y}`} x={x} y={y} />)}
    <rect x="0" y="2500" width="2500" height="160" fill="url(#shade)" />
  </svg>
);

/* ---------- icons ---------- */
const gearPoints = [];
for (let k = 0; k < 6; k++) {
  [[-28, 48], [-15.5, 66], [15.5, 66], [28, 48]].forEach(([a, r]) => {
    const rad = ((k * 60 + a) * Math.PI) / 180;
    gearPoints.push(`${(r * Math.sin(rad)).toFixed(1)},${(-r * Math.cos(rad)).toFixed(1)}`);
  });
}
const Recipes = () => (
  <svg width="50" height="50" viewBox="364 100 150 150" fill="none" stroke="currentColor" strokeWidth="8" strokeLinecap="round" strokeLinejoin="round">
    <path d="M380 112C370 116 374 150 386 162L412 186Q419 192 432 190Q440 194 442 208L470 238Q480 246 490 238Q496 229 490 221ZM402 196L374 223Q368 232 376 240Q386 246 394 238L424 208M481 108L452 134Q446 142 449 156M493 121L467 146M506 132L480 157Q472 164 458 164" />
  </svg>
);
const Leaf = () => (
  <svg width="50" height="50" viewBox="1170 100 150 150" fill="none" stroke="currentColor" strokeWidth="8" strokeLinecap="round" strokeLinejoin="round">
    <path d="M1183 118C1178 168 1188 215 1220 228C1258 242 1292 225 1290 188C1288 152 1258 136 1222 137C1203 134 1190 128 1183 118ZM1218 175Q1262 214 1306 216" />
  </svg>
);
const Gear = () => (
  <svg width="50" height="50" viewBox="-75 -75 150 150" fill="none" stroke="currentColor" strokeWidth="8" strokeLinejoin="round">
    <polygon points={gearPoints.join(" ")} /><circle r="20.5" />
  </svg>
);
const RowArrow = () => (
  <svg width="14" height="24" viewBox="0 0 14 24" fill="none" stroke="#c8c8c8" strokeWidth="3" strokeLinecap="round" strokeLinejoin="round"><path d="M2 2L12 12L2 22" /></svg>
);

const radii = ["1k", "3k", "5k", "10k", "20k"];
const stores = [["California Grocery", "0.3 km", "123 Eddy St, San Francisco"], ["Daldas Grocery", "0.3 km", "200 Eddy St, San Francisco"]];
const tabs = [["Recipes", Recipes], ["Nutrition", Leaf], ["Settings", Gear]];

export default function App() {
  return (
    <Stage>
      <Global />
      <Desktop>
        <TopWindows>
          <DarkWindow><Crumb>tures  ﹥ S</Crumb></DarkWindow>
          <LightWindow><UpdatePill><span>sh update</span><MenuDots /></UpdatePill></LightWindow>
        </TopWindows>
        <BottomWindow><FileLine>023-08</FileLine><FileLine>025-08</FileLine></BottomWindow>
      </Desktop>
      <Device>
        <Bezel>
          <Screen>
            <Header>
              <StatusBar>
                <Clock>
                  9:49
                  <svg width="27" height="29" viewBox="0 0 27 29" fill="#fff">
                    <path d="M5 6C7 2.5 9 1.5 10.5 1.2Q13 -1 15.5 1.2C20 2.5 22 6 22 11Q22 16 26 20L25.5 22H20L4 7.5ZM4 10L16.5 22H2Q0 22 0.5 20Q4 16 4 10ZM9 24.5H17.5Q16 28.5 13 28.5Q10 28.5 9 24.5Z" />
                    <path d="M2 2L26 27" stroke={purple} strokeWidth="5" /><path d="M1.5 2L25.5 27" stroke="#fff" strokeWidth="2" strokeLinecap="round" />
                  </svg>
                </Clock>
                <Island />
                <Signals>
                  <Dots><i /><i /><i /><i /></Dots>
                  <svg width="34" height="26" viewBox="0 0 34 26">
                    <g fill="none" stroke="#fff" strokeWidth="5"><path d="M2 9.2Q17 -4 32 9.2" /><path d="M7.7 15.5Q17 7 26.3 15.5" /></g>
                    <path d="M11.7 20Q17 15 22.3 20L17 25.3Z" fill="#fff" />
                  </svg>
                  <Battery /><BatteryTip />
                </Signals>
              </StatusBar>
              <NavBar>
                <BackButton>
                  <svg width="25" height="38" viewBox="0 0 25 38" fill="none" stroke="#fff" strokeWidth="5" strokeLinecap="round" strokeLinejoin="round"><path d="M21.5 3L4.5 19L21.5 35" /></svg>
                  Back
                </BackButton>
                <Title>FindGroceries</Title>
              </NavBar>
            </Header>
            <Filters>
              <SearchBox>
                beef
                <svg width="34" height="34" viewBox="0 0 34 34" fill="none" stroke="#000" strokeWidth="4" strokeLinecap="round"><circle cx="14.5" cy="14.5" r="12.2" /><path d="M23.5 23.5L31.5 31.5" /></svg>
              </SearchBox>
              <RadiusLabel>Radius: 5 km</RadiusLabel>
              <Chips>{radii.map(r => <Chip key={r} $on={r === "5k"}>{r}</Chip>)}</Chips>
            </Filters>
            <MapArea>
              <CityMap />
              <Fabs>
                <Fab $bg="#5552b1" aria-label="Collapse map">
                  <svg width="34" height="34" viewBox="0 0 34 34" fill="none" stroke="#fff" strokeWidth="2.8"><path d="M1.5 1.5L13 13M13 3V13H3M32.5 1.5L21 13M21 3V13H31M1.5 32.5L13 21M3 21H13V31M32.5 32.5L21 21M31 21H21V31" /></svg>
                </Fab>
                <Fab $bg={purple} aria-label="Locate me">
                  <svg width="38" height="38" viewBox="0 0 38 38" fill="none" stroke="#fff" strokeWidth="3.6" strokeLinecap="round"><circle cx="19" cy="19" r="13" /><path d="M19 2V7M19 31V36M2 19H7M31 19H36" /></svg>
                </Fab>
              </Fabs>
            </MapArea>
            <Sheet>
              <Handle />
              <Count>19 results</Count>
              {stores.map(([name, distance, address]) => (
                <Row key={name}>
                  <div><Name>{name}</Name><Address>{distance}<i />{address}</Address></div>
                  <RowArrow />
                </Row>
              ))}
            </Sheet>
            <TabBar>
              <Tabs>{tabs.map(([label, Icon]) => <Tab key={label} $on={label === "Settings"}><Icon />{label}</Tab>)}</Tabs>
              <HomeBar />
            </TabBar>
          </Screen>
        </Bezel>
      </Device>
    </Stage>
  );
}
